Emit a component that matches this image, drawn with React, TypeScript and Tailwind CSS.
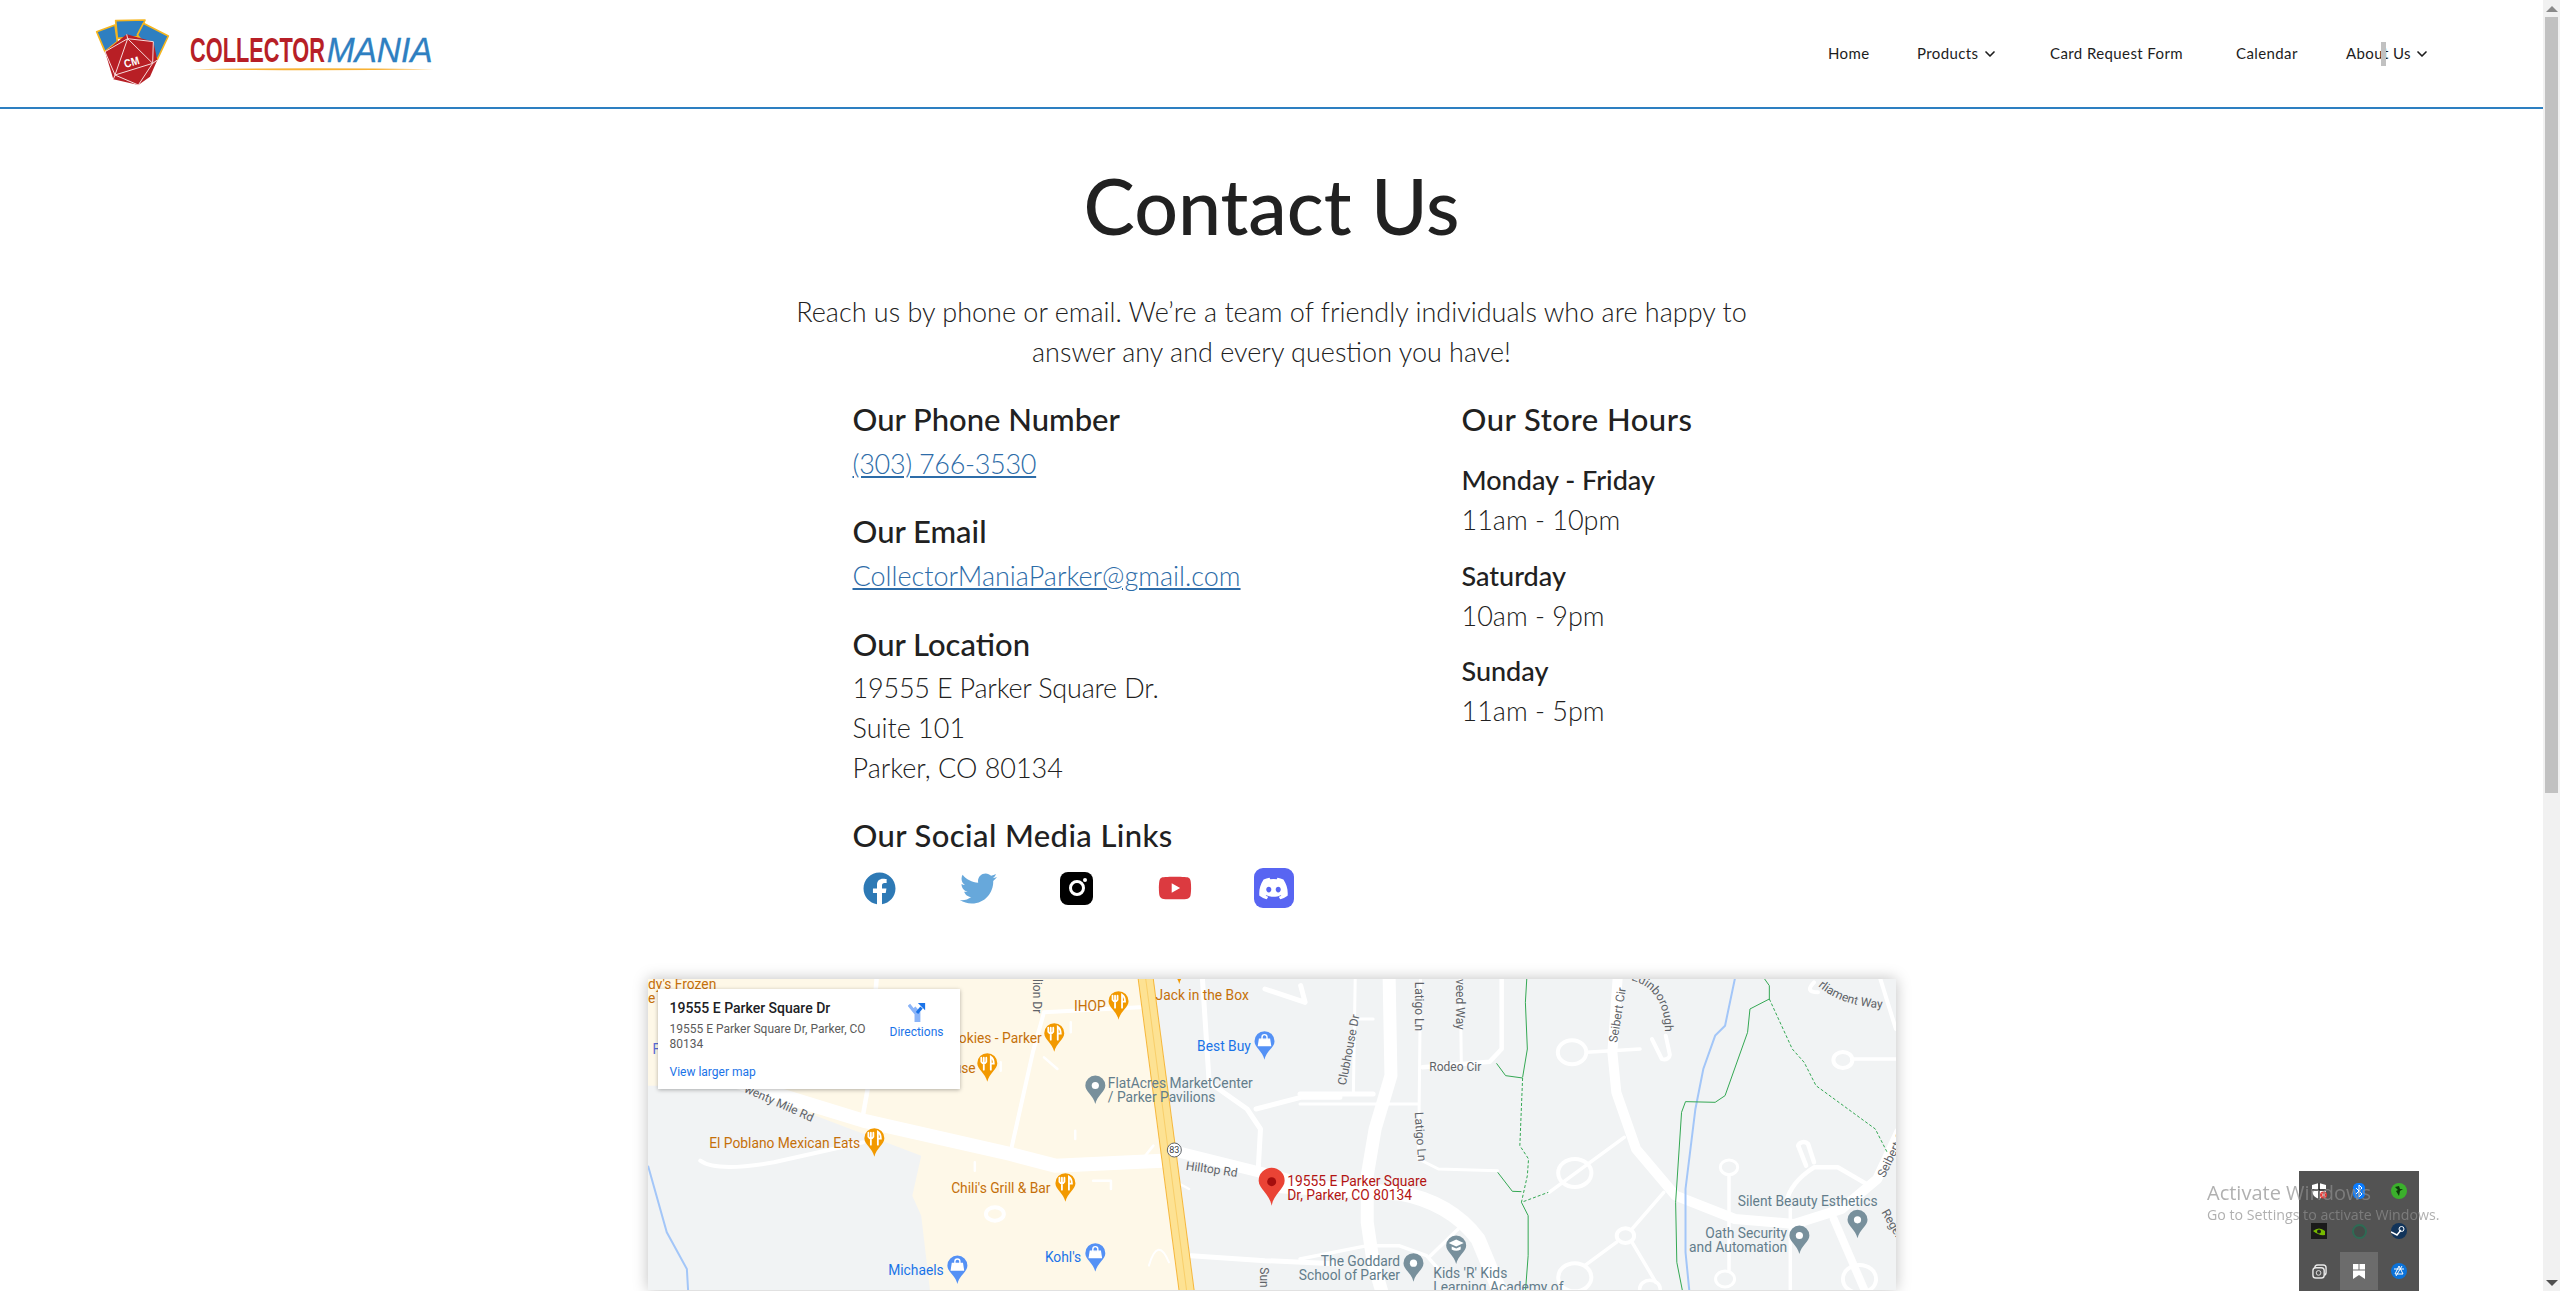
import { ChevronDown } from "lucide-react";
import { FaDiscord, FaFacebook, FaTwitter, FaYoutube } from "react-icons/fa";

const navLinks = [
  { label: "Home", width: "w-[89px]" },
  { label: "Products", width: "w-[133px]", caret: true },
  { label: "Card Request Form", width: "w-[186px]" },
  { label: "Calendar", width: "w-[110px]" },
  { label: "About Us", width: "w-[97px]", caret: true },
];

const hours = [
  { day: "Monday - Friday", time: "11am - 10pm", gap: "mt-[16px]" },
  { day: "Saturday", time: "10am - 9pm", gap: "mt-[16px]" },
  { day: "Sunday", time: "11am - 5pm", gap: "mt-[15px]" },
];

// map crops came back stretched, so x and y have different factors
const lx = (x: number) => x * 0.4464 - 8;
const rx = (x: number) => x * 0.3954 + 652;
const my = (y: number) => y / 3 - 10;

const orange = "#c5700a";
const blue = "#1a73e8";
const slate = "#637d8b";
const red = "#b31412";
const road = "#5f6368";

const pins = [
  { x: lx(1072), y: my(152), kind: "food" },
  { x: lx(525), y: my(563), kind: "food" },
  { x: lx(953), y: my(698), kind: "food" },
  { x: lx(928), y: my(248), kind: "food" },
  { x: lx(778), y: my(338), kind: "food" },
  { x: lx(1208), y: my(45), kind: "food" },
  { x: lx(1020), y: my(405), kind: "place" },
  { x: lx(1399), y: my(272), kind: "shop" },
  { x: lx(1020), y: my(908), kind: "shop" },
  { x: lx(711), y: my(945), kind: "shop" },
  { x: rx(287), y: my(938), kind: "place" },
  { x: rx(395), y: my(885), kind: "school" },
  { x: rx(1263), y: my(855), kind: "place" },
  { x: rx(1410), y: my(808), kind: "place" },
];

type Label = { x: number; y: number; text: string; fill: string; size?: number; end?: boolean; rot?: number };

const labels: Label[] = [
  { x: lx(18), y: my(60), text: "dy's Frozen", fill: orange },
  { x: lx(18), y: my(103), text: "e", fill: orange },
  { x: lx(28), y: my(255), text: "F", fill: "#5b6bd5" },
  { x: lx(155), y: my(537), text: "El Poblano Mexican Eats", fill: orange },
  { x: lx(697), y: my(672), text: "Chili's Grill & Bar", fill: orange },
  { x: lx(972), y: my(125), text: "IHOP", fill: orange },
  { x: lx(1155), y: my(92), text: "Jack in the Box", fill: orange },
  { x: lx(900), y: my(222), text: "Cookies - Parker", fill: orange, end: true },
  { x: lx(752), y: my(312), text: "House", fill: orange, end: true },
  { x: lx(1248), y: my(245), text: "Best Buy", fill: blue },
  { x: lx(556), y: my(917), text: "Michaels", fill: blue },
  { x: lx(907), y: my(880), text: "Kohl's", fill: blue },
  { x: lx(1048), y: my(356), text: "FlatAcres MarketCenter", fill: slate },
  { x: lx(1048), y: my(398), text: "/ Parker Pavilions", fill: slate },
  { x: lx(1450), y: my(650), text: "19555 E Parker Square", fill: red },
  { x: lx(1450), y: my(692), text: "Dr, Parker, CO 80134", fill: red },
  { x: lx(232), y: my(368), text: "wenty Mile Rd", fill: road, size: 12, rot: 24 },
  { x: lx(1222), y: my(602), text: "Hilltop Rd", fill: road, size: 12, rot: 8 },
  { x: lx(880), y: my(30), text: "lion Dr", fill: road, size: 12, rot: 90 },
  { x: lx(1390), y: my(895), text: "Sun", fill: road, size: 12, rot: 90 },
  { x: rx(253), y: my(890), text: "The Goddard", fill: slate, end: true },
  { x: rx(253), y: my(932), text: "School of Parker", fill: slate, end: true },
  { x: rx(337), y: my(928), text: "Kids 'R' Kids", fill: slate },
  { x: rx(337), y: my(968), text: "Learning Academy of", fill: slate },
  { x: rx(1107), y: my(710), text: "Silent Beauty Esthetics", fill: slate },
  { x: rx(1232), y: my(806), text: "Oath Security", fill: slate, end: true },
  { x: rx(1232), y: my(848), text: "and Automation", fill: slate, end: true },
  { x: rx(327), y: my(306), text: "Rodeo Cir", fill: road, size: 12 },
  { x: rx(292), y: my(38), text: "Latigo Ln", fill: road, size: 12, rot: 90 },
  { x: rx(290), y: my(430), text: "Latigo Ln", fill: road, size: 12, rot: 86 },
  { x: rx(394), y: my(30), text: "veed Way", fill: road, size: 12, rot: 90 },
  { x: rx(116), y: my(350), text: "Clubhouse Dr", fill: road, size: 12, rot: -79 },
  { x: rx(802), y: my(222), text: "Seibert Cir", fill: road, size: 12, rot: -81 },
  { x: rx(1478), y: my(628), text: "Seibert Cir", fill: road, size: 12, rot: -64 },
  { x: rx(1470), y: my(730), text: "Regent", fill: road, size: 12, rot: 60 },
];

const pinColors: Record<string, string> = {
  food: "#f29900",
  place: "#78909c",
  shop: "#5491f5",
  school: "#78909c",
};

function Pin({ x, y, kind }: { x: number; y: number; kind: string }) {
  return (
    <g transform={`translate(${x} ${y})`}>
      <path d="M0 0C-2-9-10-12-10-18.5A10 10 0 1 1 10-18.5C10-12 2-9 0 0Z" fill={pinColors[kind]} />
      {kind === "food" && (
        <g fill="none" stroke="#fff" strokeWidth="1.8" strokeLinecap="round">
          <path d="M-3.5-24V-12M-6-24V-20Q-3.5-16-1-20V-24" />
          <path d="M3.5-12V-25Q6.5-23 6.5-18H3.5" />
        </g>
      )}
      {kind === "place" && <circle cy="-18.5" r="3.6" fill="#fff" />}
      {kind === "shop" && (
        <g fill="none" stroke="#fff" strokeWidth="1.4">
          <path d="M-5-20.5H5L6-14H-6Z" fill="#fff" />
          <path d="M-2.5-20V-22.5A2.5 2.5 0 0 1 2.5-22.5V-20" />
        </g>
      )}
      {kind === "school" && (
        <g fill="#fff">
          <path d="M-7.5-21L0-24.5L7.5-21L0-17.5Z" />
          <path d="M-4.5-17.5V-14.5Q0-12 4.5-14.5V-17.5L0-15.5Z" />
        </g>
      )}
    </g>
  );
}

function MapDrawing() {
  return (
    <svg
      viewBox="0 0 1248 311"
      className="block w-full h-full font-[Roboto,sans-serif] [&_path]:[vector-effect:non-scaling-stroke] [&_circle]:[vector-effect:non-scaling-stroke]"
    >
      <defs>
        <path id="edinborough" d="M983 1Q1017 10 1017 54" />
        <path id="parliament" d="M1170 7Q1193 27 1233 29" />
      </defs>
      <rect width="1248" height="311" fill="#f1f3f4" />

      <g transform="translate(-8 -10) scale(0.4464 0.3333)">
        <path d="M0 0H1120L1240 970H650L630 740L610 680L630 560L215 350L0 350Z" fill="#fef8e8" />
        <g fill="none" stroke="#fff" strokeLinecap="round" strokeLinejoin="round">
          <path d="M220 340L500 455L830 555L930 590L1170 575" strokeWidth="14" />
          <path d="M1210 550L1450 630" strokeWidth="11" />
          <path d="M530 30L510 360L498 450" strokeWidth="4.5" />
          <path d="M905 130L880 250L830 550M905 130L1120 115" strokeWidth="4" />
          <path d="M1260 30L1275 340L1360 420L1390 480L1385 600M1380 420L1480 385H1568M1400 60L1490 100L1480 50" strokeWidth="5" />
          <path d="M135 575Q170 610 300 580L500 520" strokeWidth="4" />
          <path d="M1235 860L1400 875L1568 885" strokeWidth="5" />
          <path d="M1150 530L1120 580M1175 620L1230 660M965 160V190M905 265L935 300M808 280V305M975 485V510M750 580V605M1015 635H1055V660" strokeWidth="2.5" />
          <circle cx="795" cy="735" r="20" strokeWidth="4" />
          <path d="M1140 890Q1160 800 1185 880" strokeWidth="2" />
        </g>
        <path d="M1130 0L1225 970" stroke="#f6b73c" strokeWidth="16" />
        <path d="M1130 0L1225 970" stroke="#fde293" strokeWidth="14" />
        <path d="M1130 0L1225 970" stroke="#f9cf6a" strokeWidth="1" />
        <path d="M18 590L60 790L105 900L108 970" fill="none" stroke="#a3c6f8" strokeWidth="2" />
      </g>

      <g transform="translate(652 -10) scale(0.3954 0.3333)">
        <g fill="none" stroke="#fff" strokeLinecap="round" strokeLinejoin="round">
          <path d="M225 0L230 320L190 480L170 620V760L185 880L210 980" strokeWidth="13" />
          <path d="M-50 650L250 672Q380 700 450 810L510 980" strokeWidth="15" />
          <path d="M305 0L300 570L350 600L500 605M0 405H300" strokeWidth="3" />
          <path d="M0 375H185" strokeWidth="5" />
          <path d="M140 0L135 370M140 150H185M405 0L408 290" strokeWidth="3" />
          <path d="M310 295L480 278L510 240V0" strokeWidth="4.5" />
          <path d="M805 0L790 250L800 370L850 540L950 680L1100 750L1250 765L1370 720L1460 630L1515 490" strokeWidth="10" />
          <path d="M725 250L860 240M630 670L820 505M1395 270H1507M1085 620V905M920 670L840 780M800 820L720 890M840 820L900 940M1240 720V970" strokeWidth="3.5" />
          <path d="M1350 750L1430 970" strokeWidth="8" />
          <path d="M1230 700Q1240 640 1300 595H1360L1440 650M1280 590L1260 530A14 14 0 0 1 1285 525L1300 580" strokeWidth="4.5" />
          <path d="M0 870L170 830H250L320 860L350 900M330 860L400 780" strokeWidth="3.5" />
          <path d="M890 210L915 270A14 14 0 0 0 935 255L925 200M1460 0L1507 180M1300 40Q1275 70 1310 70" strokeWidth="4" />
          <circle cx="688" cy="250" r="36" strokeWidth="4" />
          <circle cx="695" cy="612" r="42" strokeWidth="4" />
          <circle cx="1373" cy="273" r="24" strokeWidth="4" />
          <circle cx="1085" cy="595" r="22" strokeWidth="3" />
          <circle cx="1075" cy="930" r="24" strokeWidth="3" />
          <circle cx="823" cy="800" r="22" strokeWidth="4" />
          <circle cx="695" cy="925" r="42" strokeWidth="4" />
          <circle cx="885" cy="960" r="26" strokeWidth="3.5" />
          <circle cx="1415" cy="930" r="42" strokeWidth="4" />
        </g>
        <path d="M1105 0L1075 170L1050 200L1020 300L1000 420L975 660V850L985 970" fill="none" stroke="#a3c6f8" strokeWidth="2" />
        <g fill="none" stroke="#34a853" strokeWidth="1">
          <path d="M575 0L570 100L575 240L563 325M497 283L520 320L563 327M500 610L537 667L560 668M560 700L577 740V860L570 970" />
          <path d="M1175 30L1187 50V90L1138 120L1132 190L1075 380L1050 400L975 398L965 430L950 700L953 880L968 970" />
          <g strokeDasharray="3 2">
            <path d="M563 327L556 530L578 570L575 620L560 700L628 670" />
            <path d="M1187 90L1245 240L1275 280L1305 350L1455 480L1485 550" />
          </g>
        </g>
      </g>

      <circle cx={lx(1197)} cy={my(543)} r="7" fill="#fff" stroke="#5f6368" />
      <text x={lx(1197)} y={my(543) + 3} fontSize="9" fill="#3c4043" textAnchor="middle">83</text>

      {pins.map((pin) => (
        <Pin key={`${pin.x}-${pin.y}`} {...pin} />
      ))}
      <g transform={`translate(${lx(1415)} ${my(710)})`}>
        <path d="M0 0C-2-12-13-17-13-25A13 13 0 1 1 13-25C13-17 2-12 0 0Z" fill="#ea4335" />
        <circle cy="-24" r="4.5" fill="#a50e0e" />
      </g>

      {labels.map(({ x, y, text, fill, size, end, rot }) => (
        <text
          key={`${text}-${y}`}
          transform={`translate(${x} ${y}) rotate(${rot ?? 0})`}
          fontSize={size ?? 13.8}
          fill={fill}
          textAnchor={end ? "end" : "start"}
        >
          {text}
        </text>
      ))}
      <g fontSize="12" fill={road}>
        <text><textPath href="#edinborough">Edinborough Way</textPath></text>
        <text><textPath href="#parliament">rliament Way</textPath></text>
      </g>
    </svg>
  );
}

function Logo() {
  return (
    <svg viewBox="0 0 1260 321" className="block w-[420px] h-[107px] shrink-0">
      <g fill="#2e7fc1" stroke="#f5b51e" strokeWidth="5" strokeLinejoin="round">
        <path d="M110 95L165 75L172 125L135 155Z" />
        <path d="M167 62L255 60L235 110L172 115Z" />
        <path d="M250 70L325 108L292 178L232 105Z" />
      </g>
      <path d="M200 103L280 125L292 180L270 230L235 255L160 238L135 155Z" fill="#b81f25" />
      <g fill="none" stroke="#f6dcdc" strokeWidth="3">
        <path d="M200 103L203 116M203 116L280 125L278 190L203 116L165 225L278 190M135 155L203 116M135 155L165 225L160 238M165 225L235 255L278 190L292 180" />
      </g>
      <text transform="translate(196 204) rotate(-16)" fontSize="34" fontFamily="Liberation Sans Narrow, Liberation Sans, sans-serif" fontWeight="700" fill="#fff" textLength="46" lengthAdjust="spacingAndGlyphs">CM</text>
      <text x="390" y="187" fontSize="106" fontFamily="Liberation Sans, sans-serif" fontWeight="700" fill="#b71f27" textLength="405" lengthAdjust="spacingAndGlyphs">COLLECTOR</text>
      <text x="800" y="187" fontSize="104" fontFamily="Liberation Sans, sans-serif" fontStyle="italic" fill="#2e7fc1" stroke="#2e7fc1" strokeWidth="1" textLength="318" lengthAdjust="spacingAndGlyphs">MANIA</text>
      <path d="M392 208Q760 202 1122 208Q760 214 392 208Z" fill="#f8b133" />
    </svg>
  );
}

function InstagramIcon() {
  return (
    <div className="relative flex items-center justify-center w-[33px] h-[33px] rounded-[8px] bg-black">
      <div className="w-[16px] h-[16px] rounded-full border-[3px] border-white" />
      <div className="absolute top-[6px] right-[6px] w-[4px] h-[4px] rounded-full bg-white" />
    </div>
  );
}

function TrayIcons() {
  return (
    <div className="fixed right-[141px] bottom-0 grid grid-cols-3 grid-rows-3 w-[120px] h-[120px] bg-[#535353]">
      <div className="flex items-center justify-center">
        <svg viewBox="0 0 16 16" className="w-[16px] h-[16px]">
          <path d="M8 0L15 2V8Q15 13 8 16Q1 13 1 8V2Z" fill="#fff" />
          <path d="M8 0V16M1 7H15" stroke="#111" strokeWidth="1.5" />
          <circle cx="12.5" cy="12" r="3.5" fill="#e53935" />
          <path d="M11 10.5L14 13.5M14 10.5L11 13.5" stroke="#fff" />
        </svg>
      </div>
      <div className="flex items-center justify-center">
        <svg viewBox="0 0 12 16" className="w-[12px] h-[16px]">
          <rect width="12" height="16" rx="5" fill="#0a7cff" />
          <path d="M3 5L9 11L6 14V2L9 5L3 11" fill="none" stroke="#fff" />
        </svg>
      </div>
      <div className="flex items-center justify-center">
        <svg viewBox="0 0 16 16" className="w-[16px] h-[16px]">
          <circle cx="8" cy="8" r="8" fill="#3bb02c" />
          <path d="M4 4L7 7L5 8L8 13L9 8L12 6L9 6L8 3" fill="#0d3b0a" />
        </svg>
      </div>
      <div className="flex items-center justify-center">
        <svg viewBox="0 0 16 16" className="w-[16px] h-[16px]">
          <rect width="16" height="16" fill="#1a1a1a" />
          <path d="M2 8Q8 3 14 8V12Q8 13 2 8Z" fill="#76b900" />
          <circle cx="8" cy="8.5" r="2" fill="#1a1a1a" />
        </svg>
      </div>
      <div className="flex items-center justify-center">
        <div className="w-[15px] h-[15px] rounded-full border-[2px] border-[#2e6b54] bg-[#454c49]" />
      </div>
      <div className="flex items-center justify-center">
        <svg viewBox="0 0 16 16" className="w-[16px] h-[16px]">
          <circle cx="8" cy="8" r="8" fill="#12345a" />
          <circle cx="10.5" cy="6" r="2.5" fill="none" stroke="#fff" />
          <path d="M0 9L6 12L10 7" fill="none" stroke="#fff" strokeWidth="1.5" />
        </svg>
      </div>
      <div className="flex items-center justify-center">
        <svg viewBox="0 0 16 16" className="w-[15px] h-[15px]">
          <rect x="3" y="1" width="12" height="11" rx="3" fill="none" stroke="#e8e8e8" strokeWidth="1.5" />
          <rect x="1" y="4" width="12" height="11" rx="3" fill="#535353" stroke="#e8e8e8" strokeWidth="1.5" />
          <circle cx="7" cy="9.5" r="2.5" fill="none" stroke="#e8e8e8" />
        </svg>
      </div>
      <div className="flex items-center justify-center m-px bg-[#6c6c6c]">
        <svg viewBox="0 0 12 15" className="w-[12px] h-[15px]">
          <path d="M0 0H5.5V5.5H0ZM6.5 0H12V5.5H6.5ZM0 6.5H12V15L6 11L0 15Z" fill="#fff" />
        </svg>
      </div>
      <div className="flex items-center justify-center">
        <svg viewBox="0 0 16 16" className="w-[16px] h-[16px]">
          <circle cx="8" cy="8" r="8" fill="#0b72d9" />
          <path d="M8 3L12 11H4ZM3 6L13 6M5 13L11 3" fill="none" stroke="#fff" />
        </svg>
      </div>
    </div>
  );
}

export default function App() {
  return (
    <div className="flex h-screen overflow-hidden bg-white font-[Lato,sans-serif] text-[#212121]">
      <div className="flex-1 min-w-0 overflow-hidden">
        <header className="flex items-center justify-between h-[109px] border-b-2 border-[#2d7fc1]">
          <div className="pl-[60px]">
            <Logo />
          </div>
          <nav className="flex items-center pr-[100px] text-[15px] tracking-[0.4px] whitespace-nowrap text-[#1d1d1d]">
            {navLinks.map(({ label, width, caret }) => (
              <a key={label} className={`relative flex items-center gap-[3px] ${width}`}>
                {label}
                {caret && <ChevronDown size={16} strokeWidth={2.5} />}
                {label === "About Us" && (
                  <span className="absolute left-[35px] top-0 w-[5px] h-[24px] bg-[#c1c1c1]" />
                )}
              </a>
            ))}
          </nav>
        </header>

        <main className="w-[1248px] mx-auto">
          <h1 className="pt-[48px] text-center text-[77px] leading-[96px] font-medium">Contact Us</h1>
          <p className="mt-[39px] text-center text-[27px] leading-[40px] font-light">
            Reach us by phone or email. We’re a team of friendly individuals who are happy to
            <br />
            answer any and every question you have!
          </p>

          <div className="grid grid-cols-[609px_1fr] pl-[205px] mt-[27px] text-[27px] leading-[40px] font-light">
            <div>
              <h2 className="pb-[5px] text-[31px] font-medium">Our Phone Number</h2>
              <a className="block tracking-[-0.3px] text-[#2d6ca8] underline">(303) 766-3530</a>
              <h2 className="mt-[27px] pb-[5px] text-[31px] font-medium">Our Email</h2>
              <a className="block text-[#2d6ca8] underline">CollectorManiaParker@gmail.com</a>
              <h2 className="mt-[28px] pb-[4px] text-[31px] font-medium">Our Location</h2>
              <p className="tracking-[-0.2px]">19555 E Parker Square Dr.</p>
              <p>Suite 101</p>
              <p>Parker, CO 80134</p>
              <h2 className="mt-[27px] pb-[4px] text-[31px] tracking-[0.4px] font-medium">Our Social Media Links</h2>
              <div className="flex items-center gap-[42.5px] h-[40px] mt-[9px] -ml-px">
                <div className="flex justify-center w-[56px]">
                  <FaFacebook size={33} className="text-[#2d79b5]" />
                </div>
                <div className="flex justify-center w-[56px]">
                  <FaTwitter size={37} className="text-[#67a8db]" />
                </div>
                <div className="flex justify-center w-[56px]">
                  <InstagramIcon />
                </div>
                <div className="flex justify-center w-[56px]">
                  <FaYoutube size={34} className="text-[#dc3a40]" />
                </div>
                <div className="flex justify-center w-[56px]">
                  <div className="flex items-center justify-center w-[40px] h-[40px] rounded-[9px] bg-[#5865f2]">
                    <FaDiscord size={31} className="text-white" />
                  </div>
                </div>
              </div>
            </div>
            <div>
              <h2 className="pb-[5px] text-[31px] tracking-[0.5px] font-medium">Our Store Hours</h2>
              {hours.map(({ day, time, gap }) => (
                <div key={day} className={gap}>
                  <h3 className="font-medium">{day}</h3>
                  <p>{time}</p>
                </div>
              ))}
            </div>
          </div>

          <div className="relative h-[311px] mt-[71px] shadow-[0_0_14px_rgba(0,0,0,0.25)]">
            <MapDrawing />
            <div className="absolute left-[10px] top-[10px] w-[302px] h-[100px] bg-white shadow-[0_1px_4px_rgba(0,0,0,0.3)] font-[Roboto,sans-serif]">
              <div className="flex justify-between pl-[12px] pr-[16px] pt-[9px]">
                <div className="w-[205px]">
                  <div className="text-[14px] leading-[20px] font-medium text-[#202124]">19555 E Parker Square Dr</div>
                  <div className="mt-[4px] text-[12px] leading-[15px] text-[#5b5b5b]">
                    19555 E Parker Square Dr, Parker, CO 80134
                  </div>
                  <div className="mt-[13px] text-[12px] leading-[15px] text-[#1a73e8]">View larger map</div>
                </div>
                <div className="flex flex-col items-center w-[54px] pt-[4px]">
                  <svg viewBox="0 0 20 22" className="w-[18px] h-[20px]">
                    <path d="M1 3L9 13V22H12V12L7 6" fill="none" stroke="#8ab4f8" strokeWidth="3.5" />
                    <path d="M10 12L15 6" fill="none" stroke="#1a73e8" strokeWidth="3.5" />
                    <path d="M11 1H19V9Z" fill="#1a73e8" />
                  </svg>
                  <div className="mt-[3px] text-[12px] leading-[15px] text-[#1a73e8]">Directions</div>
                </div>
              </div>
            </div>
          </div>
        </main>
      </div>

      <aside className="flex flex-col justify-between shrink-0 w-[17px] h-full bg-[#f1f1f1]">
        <div>
          <div className="flex items-center justify-center h-[17px]">
            <div className="w-0 h-0 border-x-[6px] border-b-[6px] border-x-transparent border-b-[#8a8a8a]" />
          </div>
          <div className="mx-[2px] h-[776px] bg-[#c1c1c1]" />
        </div>
        <div className="flex items-center justify-center h-[17px]">
          <div className="w-0 h-0 border-x-[6px] border-t-[6px] border-x-transparent border-t-[#505050]" />
        </div>
      </aside>

      <TrayIcons />
      <div className="fixed left-[2207px] top-[1180px] font-['Open_Sans',sans-serif] text-[#8f8f8f]/70 pointer-events-none">
        <div className="text-[20px] leading-[26px]">Activate Windows</div>
        <div className="text-[14.2px] leading-[18px]">Go to Settings to activate Windows.</div>
      </div>
    </div>
  );
}
